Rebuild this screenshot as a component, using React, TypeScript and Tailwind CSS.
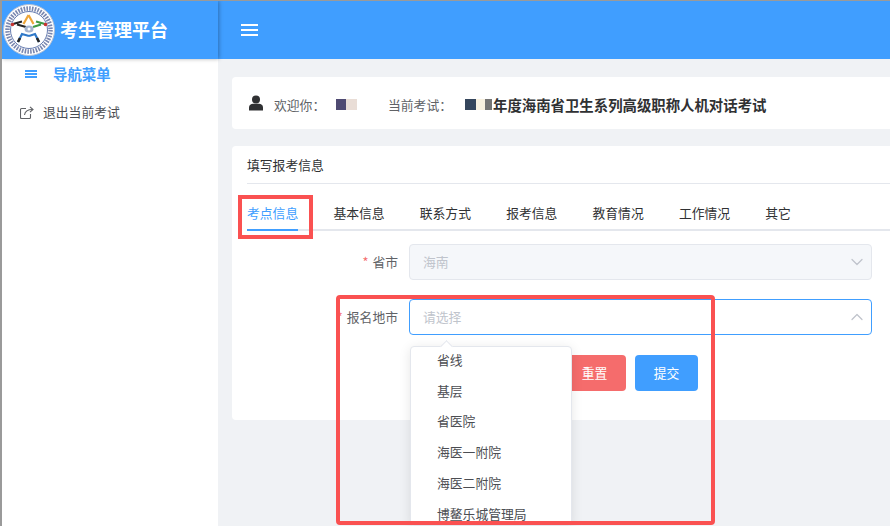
import React from "react";
import { ChevronDown, ChevronUp } from "lucide-react";

const font = "font-['Noto_Sans_CJK_SC','Liberation_Sans',sans-serif]";
const tabs = ["考点信息", "基本信息", "联系方式", "报考信息", "教育情况", "工作情况", "其它"];
const options = ["省线", "基层", "省医院", "海医一附院", "海医二附院", "博鳌乐城管理局"];

function Logo() {
  return (
    <svg width="52" height="52" viewBox="0 0 52 52" className="shrink-0">
      <circle cx="26" cy="26" r="25.5" fill="#fff" stroke="#b4c0d4" />
      <circle cx="26" cy="26" r="21.5" fill="none" stroke="#4d5f94" strokeWidth="4.5" strokeDasharray="1.6 1.2" opacity="0.75" />
      <circle cx="26" cy="26" r="18.5" fill="#fff" stroke="#3f5a9c" strokeWidth="0.8" />
      <path d="M25.5 11 L20.5 20 M25.5 11 L30.5 20" stroke="#eda63a" strokeWidth="2.2" fill="none" />
      <path d="M10 20 L19 17.5 M14 20.5 L23 23" stroke="#262626" strokeWidth="2.2" fill="none" />
      <path d="M42 20 L33 17.5 M38 20.5 L30 23" stroke="#3d9a45" strokeWidth="2.2" fill="none" />
      <path d="M15 38 L19 30 L26 32" stroke="#2f78c8" strokeWidth="2.2" fill="none" />
      <path d="M36 38 L32 30 L26 32" stroke="#2f78c8" strokeWidth="2.2" fill="none" />
      <path d="M15 38 L17 34 M36 38 L34 34" stroke="#262626" strokeWidth="2.6" fill="none" />
      <circle cx="9.5" cy="20.5" r="1.8" fill="#c8332f" />
      <circle cx="42.5" cy="20.5" r="1.8" fill="#c8332f" />
      <ellipse cx="26" cy="25" rx="4.5" ry="3.5" fill="#a4b4cf" />
      <circle cx="26" cy="25" r="1.5" fill="#fff" />
    </svg>
  );
}

function Burger({ w, step }: { w: number; step: number }) {
  return (
    <svg width={w} height={step * 2 + 2} viewBox={`0 0 ${w} ${step * 2 + 2}`} fill="currentColor" className="shrink-0">
      <rect y="0" width={w} height="2" />
      <rect y={step} width={w} height="2" />
      <rect y={step * 2} width={w} height="2" />
    </svg>
  );
}

function ExitIcon() {
  return (
    <svg width="14" height="13" viewBox="0 0 14 13" fill="none" stroke="#606266" strokeWidth="1.1" className="shrink-0">
      <path d="M6 2.5H1.5a1 1 0 0 0-1 1v8a1 1 0 0 0 1 1h8a1 1 0 0 0 1-1V8" />
      <path d="M4.5 9C5 5.5 8 3.5 12.5 3.5" />
      <path d="M10 .8l3 2.7-3 2.7" />
    </svg>
  );
}

function Label({ text }: { text: string }) {
  return (
    <label className="w-[162px] shrink-0 pr-[11px] text-right text-[12.8px] leading-9 text-[#606266]">
      <span className="mr-1 text-[#f56c6c]">*</span>
      {text}
    </label>
  );
}

export default function App() {
  return (
    <div className={`relative flex h-[526px] w-[890px] flex-col overflow-hidden border-t border-l-2 border-[#9a9a9a] bg-[#f0f2f5] ${font}`}>
      <header className="flex h-[58px] shrink-0 bg-[#409eff] text-white">
        <div className="z-10 flex w-[216px] shrink-0 items-center gap-[5px] pl-[1px] shadow-[1px_0_4px_rgba(0,0,0,0.3)]">
          <Logo />
          <span className="-mt-[2px] text-[18px] leading-none font-bold">考生管理平台</span>
        </div>
        <div className="flex items-center pl-[23px]">
          <Burger w={17} step={5} />
        </div>
      </header>
      <div className="flex min-h-0 flex-1">
        <aside className="w-[216px] shrink-0 bg-white text-[#606266]">
          <div className="flex h-[30px] items-center pl-[23px] text-[14.4px] font-bold text-[#409eff]">
            <Burger w={12} step={3} />
            <span className="ml-[16px]">导航菜单</span>
          </div>
          <div className="mt-[10px] flex h-[26px] items-center pl-[18px] text-[12.8px] text-[#4b4d52]">
            <ExitIcon />
            <span className="ml-[9px]">退出当前考试</span>
          </div>
        </aside>
        <main className="min-w-0 flex-1 overflow-hidden pt-[18px] pl-[14px]">
          <section className="flex h-[52px] w-[680px] items-center rounded-l bg-white pt-[3px] pl-[16px] text-[12.8px] text-[#606266]">
            <svg width="16" height="16" viewBox="0 0 16 16" fill="#303133" className="mb-[3px] shrink-0">
              <circle cx="8" cy="4.4" r="4" />
              <path d="M1 15.5v-3.2C1 10 3 8.8 5 8.8h6c2 0 4 1.2 4 3.5v3.2z" />
            </svg>
            <span className="ml-[10px] w-[62px]">欢迎你：</span>
            <span className="flex h-[11px] w-[21px]">
              <span className="w-[10px] bg-[#4f4a72]" />
              <span className="w-[11px] bg-[#e9ddd6]" />
            </span>
            <span className="ml-[31px] w-[77px]">当前考试：</span>
            <span className="flex h-[11px] w-[28px]">
              <span className="w-[11px] bg-[#35465c]" />
              <span className="w-[9px] bg-[#f8f1e0]" />
              <span className="w-[7px] bg-[#757575]" />
            </span>
            <span className="text-[14.4px] font-bold text-[#303133]">年度海南省卫生系列高级职称人机对话考试</span>
          </section>
          <section className="mt-[17px] h-[274px] w-[680px] rounded-l bg-white pl-[15px]">
            <div className="flex h-[38px] items-center border-b border-[#e4e7ed] text-[12.8px] text-[#303133]">填写报考信息</div>
            <nav className="flex h-[47px] gap-[35.2px] border-b-2 border-[#e4e7ed] pt-[19px] text-[12.8px] leading-[19px] text-[#303133]">
              {tabs.map((t, i) => (
                <span key={t} className={i === 0 ? "-mb-[2px] h-[28px] border-b-2 border-[#409eff] text-[#409eff]" : ""}>
                  {t}
                </span>
              ))}
            </nav>
            <div className="mt-[13px] flex">
              <Label text="省市" />
              <div className="flex h-9 w-[463px] items-center justify-between rounded border border-[#e4e7ed] bg-[#f5f7fa] pr-[4px] pl-[13px] text-[12.8px] text-[#c0c4cc]">
                海南
                <ChevronDown size={20} strokeWidth={1.5} />
              </div>
            </div>
            <div className="mt-[19px] flex">
              <Label text="报名地市" />
              <div className="flex h-9 w-[463px] items-center justify-between rounded border border-[#409eff] bg-white pr-[4px] pl-[13px] text-[12.8px] text-[#c0c4cc]">
                请选择
                <ChevronUp size={20} strokeWidth={1.5} />
              </div>
            </div>
            <div className="mt-[20px] ml-[316px] flex gap-[9px]">
              <button className="h-9 w-[63px] rounded bg-[#f56c6c] text-[12.8px] text-white">重置</button>
              <button className="h-9 w-[63px] rounded bg-[#409eff] text-[12.8px] text-white">提交</button>
            </div>
          </section>
        </main>
      </div>

      {/* Dropdown */}
      <div className="absolute top-[345px] left-[408px] h-[180px] w-[162px] rounded border border-[#e4e7ed] bg-white shadow-[0_2px_12px_rgba(0,0,0,0.1)]">
        <div className="absolute -top-[5px] left-[31px] h-[9px] w-[9px] rotate-45 border-t border-l border-[#e4e7ed] bg-white" />
        <ul className="relative -mt-[3px] text-[12.8px] text-[#4b4d52]">
          {options.map((o) => (
            <li key={o} className="flex h-[30.8px] items-center pl-[26px]">{o}</li>
          ))}
        </ul>
      </div>

      {/* Annotation boxes */}
      <div className="absolute top-[194px] left-[236px] h-[44px] w-[75px] border-[4px] border-[#fa5151]" />
      <div className="absolute top-[294px] left-[334px] h-[230px] w-[379px] rounded-sm border-[4px] border-[#fa5151]" />
    </div>
  );
}
